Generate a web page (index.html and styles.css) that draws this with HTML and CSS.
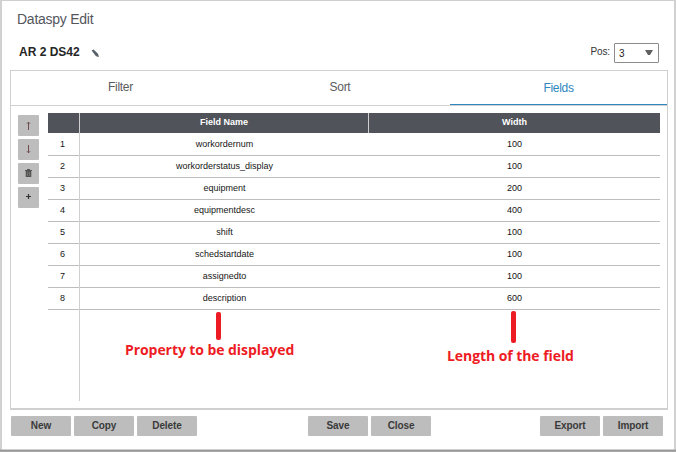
FILE: index.html
```html
<!DOCTYPE html>
<html lang="en">
<head>
<meta charset="utf-8">
<title>Dataspy Edit</title>
<link rel="stylesheet" href="styles.css">
</head>
<body>
<main class="dialog">
  <h1 class="title">Dataspy Edit</h1>
  <header class="head">
    <strong class="name">AR 2 DS42</strong>
    <svg class="pencil" width="9" height="9" viewBox="0 0 9 9"><path d="M.6 1.6 2.6.4 7 4.8 8 8 5 7.2Z" fill="#59616b"/></svg>
    <label class="pos">Pos:</label>
    <div class="select"><span>3</span><svg width="8" height="5" viewBox="0 0 8 5"><path d="M0 0h8L5 5H3Z" fill="#606060"/></svg></div>
  </header>
  <section class="panel">
    <nav class="tabs">
      <div class="tab">Filter</div>
      <div class="tab">Sort</div>
      <div class="tab active">Fields</div>
    </nav>
    <div class="content">
      <div class="tools">
        <button><svg width="7" height="9" viewBox="0 0 7 9"><path d="M3.5 9V1M2 2.7 3.5 1.2 5 2.7" fill="none" stroke="#704d4d"/></svg></button>
        <button><svg width="7" height="9" viewBox="0 0 7 9"><path d="M3.5 0v8M2 6.3 3.5 7.8 5 6.3" fill="none" stroke="#704d4d"/></svg></button>
        <button><svg class="trash" width="7" height="8" viewBox="0 0 7 8"><path d="M2 0h3v1h2v1H0V1h2Z" fill="#555"/><path d="M.7 2h5.6v6H.7Z" fill="#555"/><path d="M2.5 3v4M4.5 3v4" stroke="#85807a" stroke-width=".7"/></svg></button>
        <button><svg class="plus" width="5" height="5" viewBox="0 0 5 5"><path d="M2.5 0v5M0 2.5h5" stroke="#333" stroke-width="1.2"/></svg></button>
      </div>
      <div class="grid">
        <div class="row header"><div></div><div>Field Name</div><div>Width</div></div>
        <div class="row"><div>1</div><div>workordernum</div><div>100</div></div>
        <div class="row"><div>2</div><div>workorderstatus_display</div><div>100</div></div>
        <div class="row"><div>3</div><div>equipment</div><div>200</div></div>
        <div class="row"><div>4</div><div>equipmentdesc</div><div>400</div></div>
        <div class="row"><div>5</div><div>shift</div><div>100</div></div>
        <div class="row"><div>6</div><div>schedstartdate</div><div>100</div></div>
        <div class="row"><div>7</div><div>assignedto</div><div>100</div></div>
        <div class="row"><div>8</div><div>description</div><div>600</div></div>
        <div class="rest"></div>
      </div>
    </div>
  </section>
  <footer class="actions">
    <div class="group"><button>New</button><button>Copy</button><button>Delete</button></div>
    <div class="group"><button>Save</button><button>Close</button></div>
    <div class="group"><button>Export</button><button>Import</button></div>
  </footer>
</main>
<div class="mark mark-name"></div>
<div class="note note-name">Property to be displayed</div>
<div class="mark mark-width"></div>
<div class="note note-width">Length of the field</div>
</body>
</html>
```
FILE: styles.css
```css
* { box-sizing: border-box; }
body {
  margin: 0;
  width: 676px;
  height: 452px;
  overflow: hidden;
  position: relative;
  background: linear-gradient(#d2d2d2, #d2d2d2 449px, #909090 450px, #b0b0b0);
  font-family: "Liberation Sans", Arial, sans-serif;
  color: #222;
}
.dialog {
  width: 674px;
  height: 450px;
  margin-left: 1px;
  padding: 0 8px;
  background: #fff;
  border: 1px solid #cfcfd1;
  display: flex;
  flex-direction: column;
}
.title { margin: 0; height: 41px; padding: 9px 0 0 7px; font-size: 14px; line-height: 18px; font-weight: 400; color: #54565c; letter-spacing: -.25px; }
.head { height: 28px; display: flex; align-items: flex-start; padding-left: 9px; }
.name { font-size: 12px; line-height: 20px; color: #262626; width: 64px; white-space: nowrap; }
.pencil { margin: 7px 0 0 8px; }
.pos { margin: 0 4px 0 auto; font-size: 10px; line-height: 20px; color: #333; letter-spacing: -.1px; }
.select { width: 45px; height: 20px; margin: 1px 7px 0 0; border: 1px solid #8c8c8c; border-radius: 1px; padding: 0 5px 0 4px; display: flex; align-items: center; justify-content: space-between; font-size: 10px; }
.select svg { margin-bottom: 1px; }
.panel { width: 658px; height: 340px; border: 1px solid #d0d0d0; border-bottom-width: 2px; }
.tabs { display: grid; grid-template: 34px / 219px 220px 217px; height: 35px; border-bottom: 1px solid #d0d0d0; }
.tab { text-align: center; font-size: 12px; line-height: 33px; color: #5a5c60; letter-spacing: -.3px; }
.tab.active { border-bottom: 1px solid #2f86c0; color: #2f86c0; line-height: 35px; }
.content { display: flex; padding: 7px 0 0 7px; }
.tools { display: flex; flex-direction: column; gap: 3px; padding-top: 2px; width: 30px; }
.tools button { width: 21px; height: 21px; padding: 0; border: 0; border-radius: 1px; background: #bdbdbd; display: flex; align-items: center; justify-content: center; }
.trash, .plus { margin-bottom: 2px; }
.grid { width: 612px; }
.row { display: grid; grid-template-columns: 32px 289px 291px; height: 22px; font-size: 9px; line-height: 20px; color: #151515; text-align: center; border-bottom: 1px solid #bdbdbd; }
.row > div:first-child { border-right: 1px solid #d0d0d0; margin-bottom: -1px; padding-right: 2px; }
.header { height: 20px; line-height: 18px; background: #50535a; color: #fff; font-weight: 700; border: 0; margin-bottom: 1px; }
.header > div:nth-child(2) { border-right: 1px solid #d0d0d0; }
.rest { width: 32px; height: 91px; border-right: 1px solid #d0d0d0; }
.actions { display: flex; justify-content: space-between; margin: 6px 3px 0 1px; }
.group { display: flex; gap: 3px; }
.group:nth-child(2) { margin-left: 2px; }
.actions button { width: 60px; height: 20px; padding: 0; border: 0; border-radius: 1px; background: #bdbdbd; color: #3a3a3a; font: 700 10px/20px "Liberation Sans", Arial, sans-serif; letter-spacing: -.1px; }
.mark { position: absolute; width: 5px; border-radius: 2px; background: #ed1c24; }
.mark-name { left: 216px; top: 312px; height: 28px; }
.mark-width { left: 511px; top: 311px; height: 32px; }
.note { position: absolute; color: #ed1c24; font: 700 14px/20px "Open Sans", sans-serif; white-space: nowrap; letter-spacing: -.07px; }
.note-name { left: 125px; top: 340px; }
.note-width { left: 447px; top: 346px; }
```
